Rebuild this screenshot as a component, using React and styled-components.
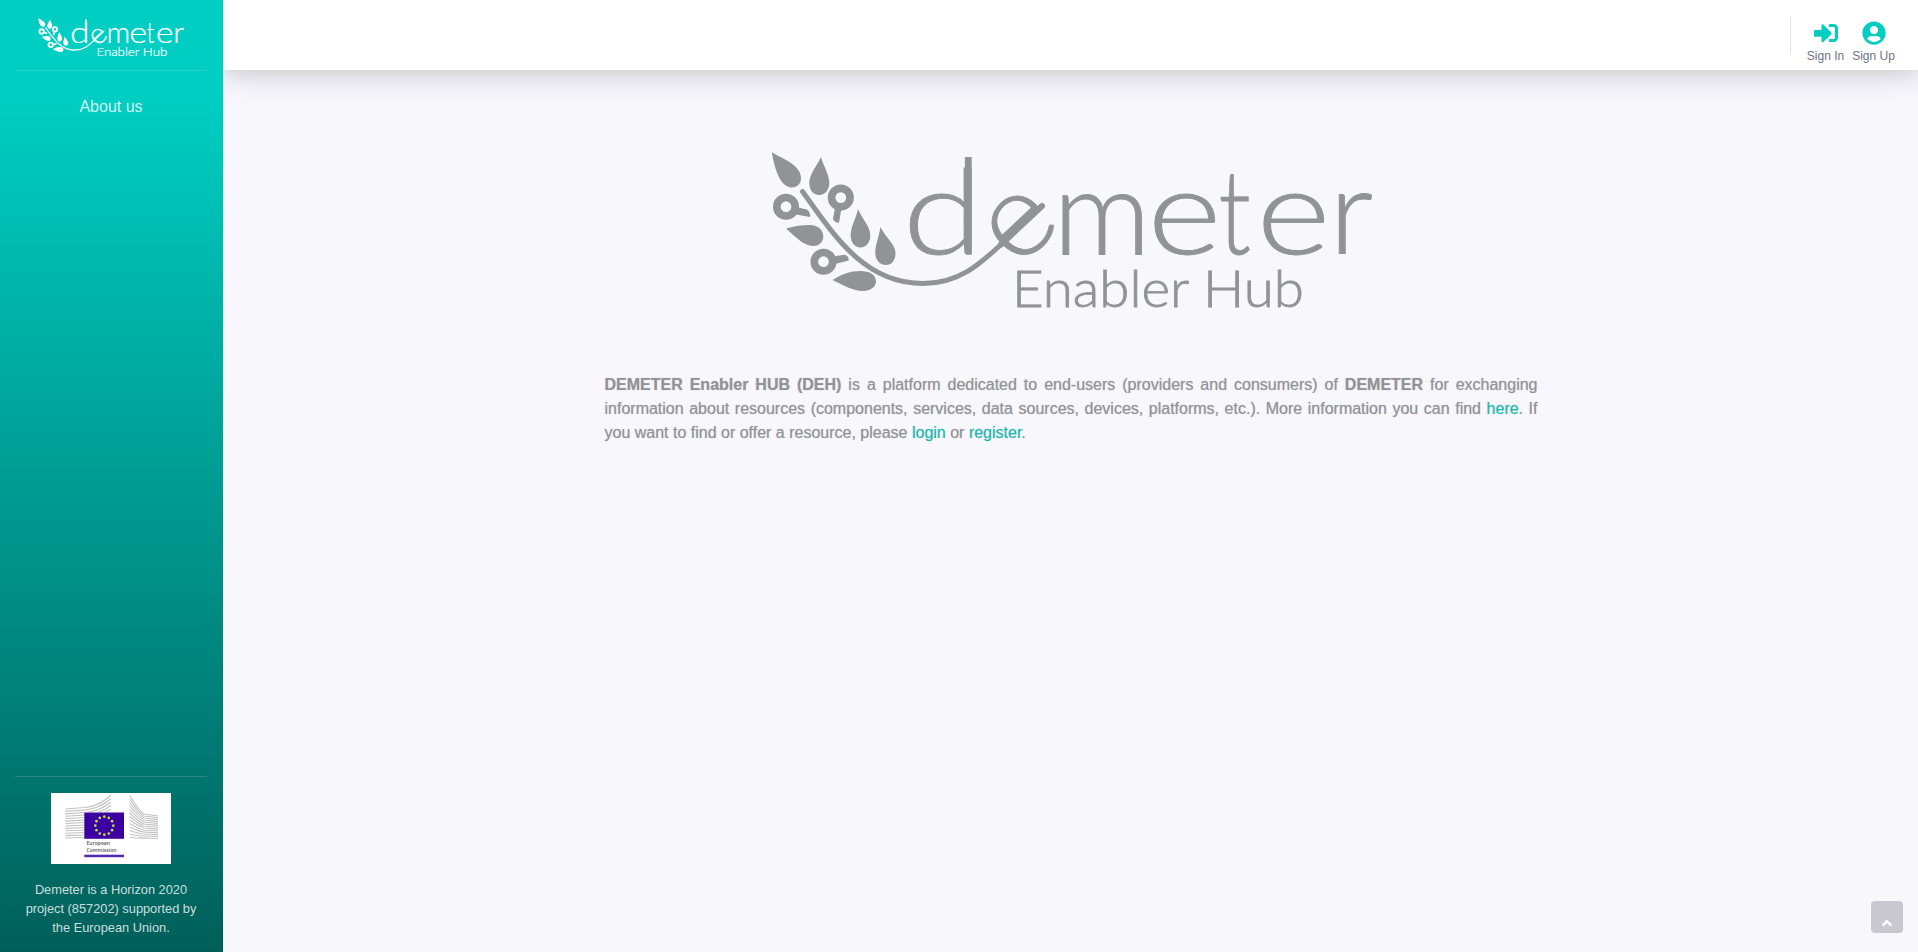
import React from "react";
import styled, { createGlobalStyle } from "styled-components";
import { FaSignInAlt, FaUserCircle, FaAngleUp } from "react-icons/fa";

const GlobalStyle = createGlobalStyle`
  *, *::before, *::after { box-sizing: border-box; }
  body {
    margin: 0;
    font-family: "Liberation Sans", Arial, sans-serif;
    font-size: 16px;
    line-height: 1.5;
    background: #f8f7fc;
    overflow: hidden;
  }
  a { text-decoration: none; }
`;

const Page = styled.div`
  display: flex;
  height: 100vh;
`;

const Sidebar = styled.aside`
  position: relative;
  z-index: 1;
  display: flex;
  flex-direction: column;
  width: 223px;
  flex: none;
  padding: 0 16px 0 15px;
  background: linear-gradient(180deg, #00cec2 10%, #005f59 100%);
`;

const Brand = styled.a`
  display: flex;
  justify-content: center;
  height: 70px;
  padding-top: 18px;
  color: #fff;
`;

const Divider = styled.hr`
  width: 100%;
  margin: 0;
  border: 0;
  border-top: 1px solid rgba(255, 255, 255, 0.15);
`;

const NavLink = styled.a`
  margin-top: 24px;
  text-align: center;
  color: rgba(255, 255, 255, 0.8);
`;

const Funding = styled.div`
  display: flex;
  flex-direction: column;
  align-items: center;
  margin-top: auto;
  padding-bottom: 15px;
`;

const FundingLogo = styled.svg`
  display: block;
  margin: 16px 0;
  background: #fff;
`;

const FundingText = styled.p`
  margin: 0;
  font-size: 12.8px;
  line-height: 19px;
  text-align: center;
  color: rgba(255, 255, 255, 0.8);
`;

const Main = styled.div`
  display: flex;
  flex: 1;
  flex-direction: column;
  align-items: center;
`;

const Topbar = styled.header`
  display: flex;
  justify-content: flex-end;
  width: 100%;
  height: 70px;
  padding: 16px 20px 0 0;
  background: #fff;
  box-shadow: 0 2.4px 28px 0 rgba(58, 59, 69, 0.3);
`;

const TopbarDivider = styled.div`
  width: 1px;
  height: 38px;
  margin-right: 11px;
  background: #e3e6f0;
`;

const TopbarLink = styled.a`
  display: flex;
  flex-direction: column;
  align-items: center;
  width: ${(p) => p.$width}px;
  padding-top: 5px;
  font-size: 12px;
  line-height: 18px;
  color: #6e757f;
  white-space: nowrap;
  svg { color: #00cec2; margin-bottom: 2px; }
`;

const Hero = styled.div`
  height: 158px;
  margin: 81px 0 64px 2px;
  color: #929396;
`;

const Intro = styled.p`
  width: 933px;
  margin: 0 0 0 1px;
  text-align: justify;
  color: #929396;
  text-shadow: 0 0 1px rgba(146, 147, 150, 0.6);
  a { color: #10bdb1; }
`;

const ScrollTop = styled.a`
  position: fixed;
  right: 15px;
  bottom: 19px;
  display: flex;
  justify-content: center;
  width: 32px;
  height: 32px;
  padding-top: 14px;
  border-radius: 4px;
  color: #fff;
  background: #c9c8d1;
`;

const Wordmark = styled.text`
  font-family: Lato, "Open Sans", sans-serif;
  font-weight: 300;
  fill: currentColor;
  stroke: currentColor;
`;

const LETTERS = [
  { char: "d", x: 142.5, y: 114, stretch: 1.24 },
  { char: "e", x: 257, y: 129.5, stretch: 1.04, turn: -43 },
  { char: "m", x: 293, y: 114, stretch: 1.03 },
  { char: "e", x: 387.5, y: 114, stretch: 1.2 },
  { char: "t", x: 458.5, y: 114, stretch: 0.8 },
  { char: "e", x: 496.5, y: 114, stretch: 1.2 },
  { char: "r", x: 569, y: 114, stretch: 1.06 },
];

function DemeterLogo({ width }) {
  return (
    <svg width={width} height={(width * 158) / 602} viewBox="11 11 602 158" fill="currentColor" overflow="visible">
      <path d="M11.7 12C20 18 41 24 41 38C41 44 37 47.5 32 47.5C20 47 15 30 11.7 12Z" />
      <path d="M61 17C64 27 69.3 35 69.3 43C69.3 50 65 55 59.3 55C53 55 49.3 50 49.3 43C49.3 34 57 26 61 17Z" />
      <path d="M98 69C102 79 110.3 86 110.3 95.5C110.3 102.5 106 107.5 100.5 107.5C95 107.5 90.7 102.5 90.7 95.5C90.7 86 96 79 98 69Z" />
      <path d="M120.5 87C125 97 135.5 104 135.5 113C135.5 120 132 125 126 125C120 125 115.3 120 115.3 113C115.3 104 119 97 120.5 87Z" />
      <path d="M26 88.5C34 86 43 85 50 85C58 85 63.3 90 63.3 96.5C63.3 102 59 106 53.5 106C43 106 35 96 26 88.5Z" />
      <path d="M72.5 140C82 134 91 131 100 131C110 131 116 135 116 141.5C116 147 110 151 103 151C93 151 83 145 72.5 140Z" />
      <path d="M36 74.5L50 77Q51 73 47 69.5L38 67.5Z" />
      <path d="M75 68L73 79Q74.5 82.5 79 82.7L81.5 68Z" />
      <path d="M73 116.5L84.5 114.7Q89 116 88.7 120.5L75 124Z" />
      <g fill="none" stroke="currentColor">
        <circle cx="26" cy="66.7" r="9.2" strokeWidth="7.7" />
        <circle cx="80.8" cy="57.6" r="9.2" strokeWidth="7.7" />
        <circle cx="63.5" cy="121.7" r="9.2" strokeWidth="7.7" />
        <path d="M42.5 51.5C75 97 105 143.5 163 143.5C200 143.5 222 122 241 104.5" strokeWidth="5" strokeLinecap="round" />
        <path d="M241 104.5L282 66" strokeWidth="6" strokeLinecap="round" />
        <path d="M208.3 17V114" strokeWidth="6.8" />
      </g>
      {LETTERS.map(({ char, x, y, stretch, turn = 0 }, i) => (
        <Wordmark
          key={i}
          fontSize="118"
          strokeWidth="0.8"
          transform={`translate(${x} ${y}) rotate(${turn}) scale(${stretch} 1)`}
        >
          {char}
        </Wordmark>
      ))}
      <Wordmark
        fontSize="51.5"
        strokeWidth="0.8"
        x="252"
        y="166.5"
        textLength="292"
        lengthAdjust="spacingAndGlyphs"
      >
        Enabler Hub
      </Wordmark>
    </svg>
  );
}

const STARS = Array.from({ length: 12 }, (_, i) => {
  const a = (i * Math.PI) / 6;
  return [53.3 + 9 * Math.sin(a), 32.7 - 9 * Math.cos(a)];
});
const STRIPES = Array.from({ length: 13 }, (_, i) => i);

function CommissionLogo() {
  return (
    <FundingLogo width="120" height="71" viewBox="0 0 120 71">
      <g fill="none" stroke="#c2c2c2" strokeWidth="1.1">
        {STRIPES.map((i) => (
          <path
            key={i}
            d={`M14.3 ${16 + i * 2.42}L34 ${14.5 + i * 2.5}Q49 ${13 + i * 2.6} 60 ${2 + i * 3.5}`}
          />
        ))}
        {STRIPES.map((i) => (
          <path
            key={i}
            d={`M78.7 ${2.5 + i * 3.5}Q89 ${19 + i * 2.2} 93 ${21 + i * 2}L107 ${23 + i * 1.87}`}
          />
        ))}
      </g>
      <rect x="33" y="19" width="40.5" height="27.5" fill="#fff" />
      <rect x="14" y="46" width="93" height="14" fill="#fff" />
      <rect x="33.3" y="19.5" width="39.7" height="26.3" fill="#3c00a0" />
      {STARS.map(([x, y], i) => (
        <circle key={i} cx={x} cy={y} r="1.35" fill="#b9d84a" />
      ))}
      <g fill="#555" fontSize="5.4" fontWeight="600" fontFamily="Open Sans, sans-serif">
        <text x="35.5" y="52.3" textLength="23.5" lengthAdjust="spacingAndGlyphs">European</text>
        <text x="35.5" y="58.8" textLength="30" lengthAdjust="spacingAndGlyphs">Commission</text>
      </g>
      <rect x="33.3" y="61.7" width="39.7" height="2.5" fill="#5128b4" />
    </FundingLogo>
  );
}

export default function App() {
  return (
    <Page>
      <GlobalStyle />
      <Sidebar>
        <Brand href="#">
          <DemeterLogo width={146} />
        </Brand>
        <Divider />
        <NavLink href="#">About us</NavLink>
        <Funding>
          <Divider />
          <CommissionLogo />
          <FundingText>
            Demeter is a Horizon 2020
            <br />
            project (857202) supported by
            <br />
            the European Union.
          </FundingText>
        </Funding>
      </Sidebar>
      <Main>
        <Topbar>
          <TopbarDivider />
          <TopbarLink href="#" $width={47}>
            <FaSignInAlt size={24} />
            Sign In
          </TopbarLink>
          <TopbarLink href="#" $width={49}>
            <FaUserCircle size={24} />
            Sign Up
          </TopbarLink>
        </Topbar>
        <Hero>
          <DemeterLogo width={602} />
        </Hero>
        <Intro>
          <strong>DEMETER Enabler HUB (DEH)</strong> is a platform dedicated to end-users (providers and
          consumers) of <strong>DEMETER</strong> for exchanging information about resources (components,
          services, data sources, devices, platforms, etc.). More information you can find{" "}
          <a href="#">here</a>. If you want to find or offer a resource, please <a href="#">login</a> or{" "}
          <a href="#">register</a>.
        </Intro>
      </Main>
      <ScrollTop href="#">
        <FaAngleUp size={16} />
      </ScrollTop>
    </Page>
  );
}
